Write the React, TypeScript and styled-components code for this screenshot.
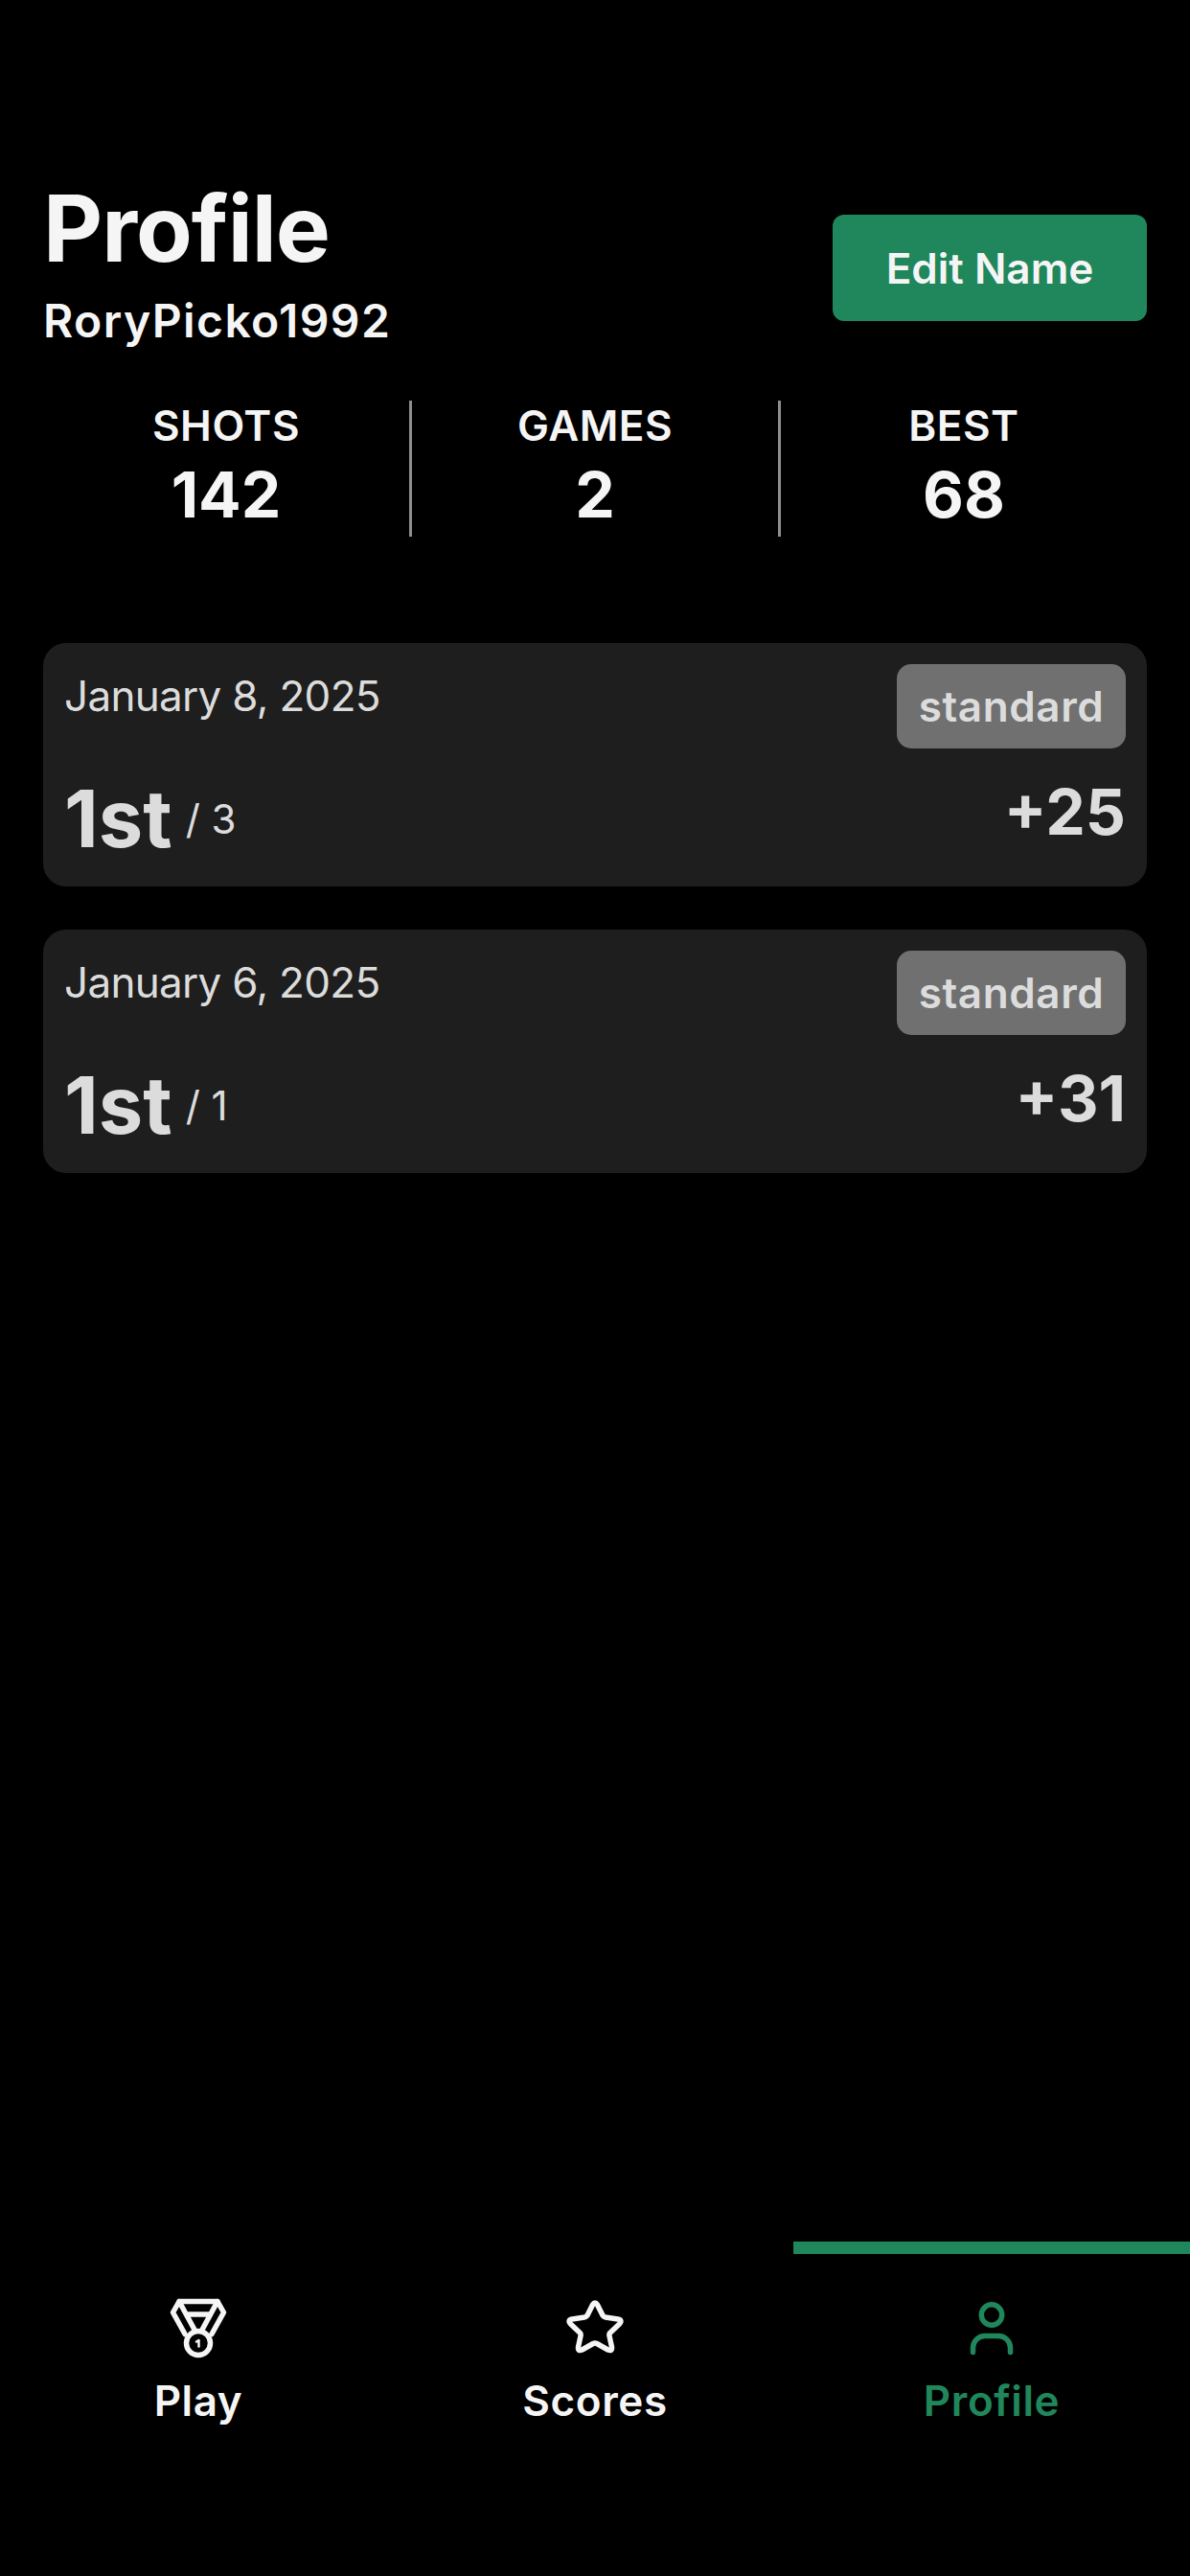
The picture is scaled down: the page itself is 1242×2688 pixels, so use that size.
import React from "react";
import styled, { createGlobalStyle } from "styled-components";

const Global = createGlobalStyle`
  html, body { margin: 0; padding: 0; background: #000; }
  body { font-family: Inter, "Noto Sans", sans-serif; color: #f5f5f5; }
`;

const GREEN = "#1f875b";

const Page = styled.div`
  width: 1242px;
  height: 2688px;
  display: flex;
  flex-direction: column;
  background: #000;
`;
const Main = styled.main`
  flex: 1;
  padding: 180px 45px 0;
  display: flex;
  flex-direction: column;
`;
const Header = styled.header`
  display: flex;
  justify-content: space-between;
  align-items: flex-start;
`;
const Names = styled.div`
  display: flex;
  flex-direction: column;
  gap: 10px;
`;
const Title = styled.h1`
  margin: 0;
  font-size: 96px;
  line-height: 116px;
  font-weight: 700;
  letter-spacing: -1px;
`;
const UserName = styled.div`
  font-size: 48px;
  line-height: 58px;
  font-weight: 600;
  letter-spacing: 1.4px;
`;
const EditButton = styled.button`
  margin-top: 44px;
  width: 328px;
  height: 111px;
  border: 0;
  border-radius: 12px;
  background: ${GREEN};
  color: #f5f5f5;
  font-family: inherit;
  font-size: 44px;
  font-weight: 600;
`;
const Stats = styled.section`
  margin-top: 54px;
  display: flex;
`;
const Stat = styled.div`
  flex: 1;
  height: 142px;
  display: flex;
  flex-direction: column;
  align-items: center;
  gap: 5px;
`;
const StatDivider = styled.div`
  width: 3px;
  background: #8e8e8e;
`;
const StatLabel = styled.div`
  font-size: 44px;
  line-height: 53px;
  font-weight: 600;
  letter-spacing: 0.5px;
`;
const StatValue = styled.div`
  font-size: 66px;
  line-height: 80px;
  font-weight: 700;
`;
const Games = styled.section`
  margin-top: 111px;
  display: flex;
  flex-direction: column;
  gap: 45px;
`;
const Card = styled.article`
  background: #1e1e1e;
  border-radius: 24px;
  padding: 22px;
  color: #dcdcdc;
  display: flex;
  flex-direction: column;
  gap: 25px;
`;
const Row = styled.div`
  display: flex;
  justify-content: space-between;
  align-items: flex-start;
`;
const DateText = styled.div`
  margin-top: 7px;
  font-size: 44px;
  line-height: 53px;
  font-weight: 400;
  letter-spacing: -0.7px;
`;
const Badge = styled.div`
  width: 239px;
  height: 88px;
  border-radius: 15px;
  background: #707070;
  display: flex;
  align-items: center;
  justify-content: center;
  font-size: 44px;
  font-weight: 600;
  letter-spacing: 0.6px;
`;
const Placing = styled.div`
  display: flex;
  align-items: center;
  gap: 14px;
`;
const Rank = styled.div`
  font-size: 83px;
  line-height: 97px;
  font-weight: 700;
`;
const Field = styled.div`
  font-size: 42px;
  line-height: 51px;
  font-weight: 400;
`;
const Score = styled.div`
  margin-top: 3px;
  font-size: 66px;
  line-height: 77px;
  font-weight: 700;
`;
const Nav = styled.nav`
  height: 349px;
  display: grid;
  grid-template-columns: 414px 414px 414px;
`;
const Tab = styled.div<{ $active?: boolean }>`
  box-sizing: border-box;
  border-top: 13px solid ${(p) => (p.$active ? GREEN : "transparent")};
  color: ${(p) => (p.$active ? GREEN : "#f5f5f5")};
  padding-top: 38px;
  display: flex;
  flex-direction: column;
  align-items: center;
`;
const IconSlot = styled.svg`
  width: 72px;
  height: 72px;
  fill: none;
  stroke: currentColor;
  stroke-width: 5.5;
  stroke-linecap: round;
  stroke-linejoin: round;
`;
const TabLabel = styled.div`
  margin-top: 17px;
  font-size: 44px;
  line-height: 53px;
  font-weight: 600;
  letter-spacing: 0.6px;
`;

const MedalIcon = () => (
  <IconSlot viewBox="0 0 72 72">
    <path d="M16 11.500h40l6.500 11.500-12.500 22.500M22 45.500 9.500 23 16 11.500 32 41M40 41 56 11.500M24 25h24" />
    <circle cx="36" cy="55" r="12.500" />
    <path d="M34 53.500l2.500-1.500v6.500" strokeWidth="2.500" />
  </IconSlot>
);
const StarIcon = () => (
  <IconSlot viewBox="0 0 72 72">
    <path d="M33.500 15Q36 11 38.500 15L44 26Q45 27.500 47 28L60 30Q65 31 61.500 35L52 44Q50.500 45.500 51 47.500L53.500 59Q54 64 49.500 62L38 55.500Q36 54.500 34 55.500L22.500 62Q18 64 18.500 59L21 47.500Q21.500 45.500 20 44L10.500 35Q7 31 12 30L25 28Q27 27.500 28 26Z" />
  </IconSlot>
);
const UserIcon = () => (
  <IconSlot viewBox="0 0 72 72">
    <circle cx="36" cy="25.500" r="10.700" />
    <path d="M16.500 64.500v-4.500a12.500 12.500 0 0 1 12.500-12.500h14a12.500 12.500 0 0 1 12.500 12.500v4.500" />
  </IconSlot>
);

const games = [
  { date: "January 8, 2025", field: "/ 3", score: "+25" },
  { date: "January 6, 2025", field: "/ 1", score: "+31" },
];

export default function App() {
  return (
    <Page>
      <Global />
      <Main>
        <Header>
          <Names>
            <Title>Profile</Title>
            <UserName>RoryPicko1992</UserName>
          </Names>
          <EditButton>Edit Name</EditButton>
        </Header>
        <Stats>
          <Stat>
            <StatLabel>SHOTS</StatLabel>
            <StatValue>142</StatValue>
          </Stat>
          <StatDivider />
          <Stat>
            <StatLabel>GAMES</StatLabel>
            <StatValue>2</StatValue>
          </Stat>
          <StatDivider />
          <Stat>
            <StatLabel>BEST</StatLabel>
            <StatValue>68</StatValue>
          </Stat>
        </Stats>
        <Games>
          {games.map((g) => (
            <Card key={g.date}>
              <Row>
                <DateText>{g.date}</DateText>
                <Badge>standard</Badge>
              </Row>
              <Row>
                <Placing>
                  <Rank>1st</Rank>
                  <Field>{g.field}</Field>
                </Placing>
                <Score>{g.score}</Score>
              </Row>
            </Card>
          ))}
        </Games>
      </Main>
      <Nav>
        <Tab>
          <MedalIcon />
          <TabLabel>Play</TabLabel>
        </Tab>
        <Tab>
          <StarIcon />
          <TabLabel>Scores</TabLabel>
        </Tab>
        <Tab $active>
          <UserIcon />
          <TabLabel>Profile</TabLabel>
        </Tab>
      </Nav>
    </Page>
  );
}
